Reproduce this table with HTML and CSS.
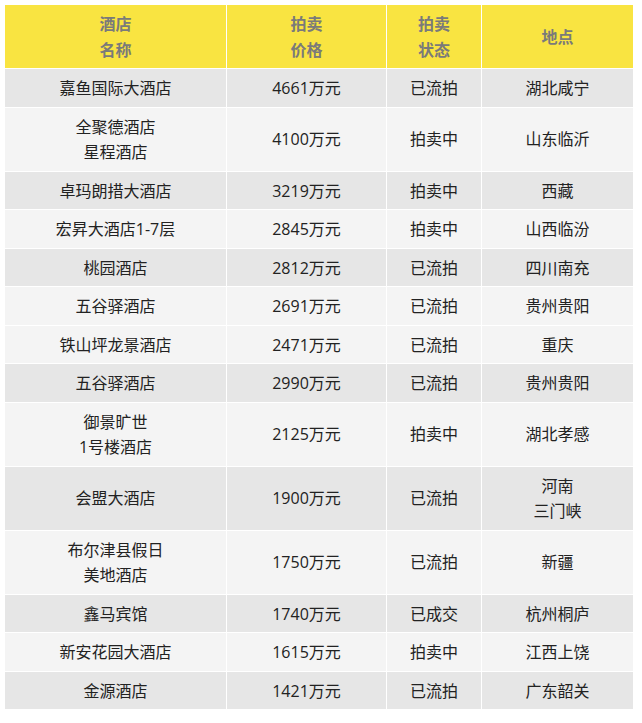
FILE: index.html
```html
<!DOCTYPE html>
<html lang="zh-CN">
<head>
<meta charset="utf-8">
<title>酒店拍卖</title>
<link rel="stylesheet" href="styles.css">
</head>
<body>
<div class="wrap">
<table class="auction">
  <colgroup>
    <col class="c-name"><col class="c-price"><col class="c-status"><col class="c-place">
  </colgroup>
  <thead>
    <tr><th>酒店<br>名称</th><th>拍卖<br>价格</th><th>拍卖<br>状态</th><th>地点</th></tr>
  </thead>
  <tbody>
    <tr class="dark"><td>嘉鱼国际大酒店</td><td>4661万元</td><td>已流拍</td><td>湖北咸宁</td></tr>
    <tr class="light"><td>全聚德酒店<br>星程酒店</td><td>4100万元</td><td>拍卖中</td><td>山东临沂</td></tr>
    <tr class="dark"><td>卓玛朗措大酒店</td><td>3219万元</td><td>拍卖中</td><td>西藏</td></tr>
    <tr class="light"><td>宏昇大酒店1-7层</td><td>2845万元</td><td>拍卖中</td><td>山西临汾</td></tr>
    <tr class="dark"><td>桃园酒店</td><td>2812万元</td><td>已流拍</td><td>四川南充</td></tr>
    <tr class="light"><td>五谷驿酒店</td><td>2691万元</td><td>已流拍</td><td>贵州贵阳</td></tr>
    <tr class="light"><td>铁山坪龙景酒店</td><td>2471万元</td><td>已流拍</td><td>重庆</td></tr>
    <tr class="dark"><td>五谷驿酒店</td><td>2990万元</td><td>已流拍</td><td>贵州贵阳</td></tr>
    <tr class="light"><td>御景旷世<br>1号楼酒店</td><td>2125万元</td><td>拍卖中</td><td>湖北孝感</td></tr>
    <tr class="dark"><td>会盟大酒店</td><td>1900万元</td><td>已流拍</td><td>河南<br>三门峡</td></tr>
    <tr class="light"><td>布尔津县假日<br>美地酒店</td><td>1750万元</td><td>已流拍</td><td>新疆</td></tr>
    <tr class="dark"><td>鑫马宾馆</td><td>1740万元</td><td>已成交</td><td>杭州桐庐</td></tr>
    <tr class="light"><td>新安花园大酒店</td><td>1615万元</td><td>拍卖中</td><td>江西上饶</td></tr>
    <tr class="dark"><td>金源酒店</td><td>1421万元</td><td>已流拍</td><td>广东韶关</td></tr>
  </tbody>
</table>
</div>
</body>
</html>
```

FILE: styles.css
```css
html, body {
  margin: 0;
  padding: 0;
  background: #ffffff;
}
.wrap {
  padding: 4px 0 0 4px;
}
.auction {
  border-collapse: collapse;
  table-layout: fixed;
  width: 629px;
  font-family: "Open Sans", "Noto Sans CJK SC", sans-serif;
  font-size: 16px;
  line-height: 25.5px;
  color: #222222;
}
.c-name { width: 222px; }
.c-price { width: 160px; }
.c-status { width: 95px; }
.c-place { width: 152px; }
.auction th,
.auction td {
  border: 1px solid #ffffff;
  padding: 7px 0 5px;
  text-align: center;
  vertical-align: middle;
}
.auction th {
  background: #f9e441;
  color: #7a7a7a;
  font-weight: bold;
}
.dark td { background: #e6e6e6; }
.light td { background: #f4f4f4; }
```
